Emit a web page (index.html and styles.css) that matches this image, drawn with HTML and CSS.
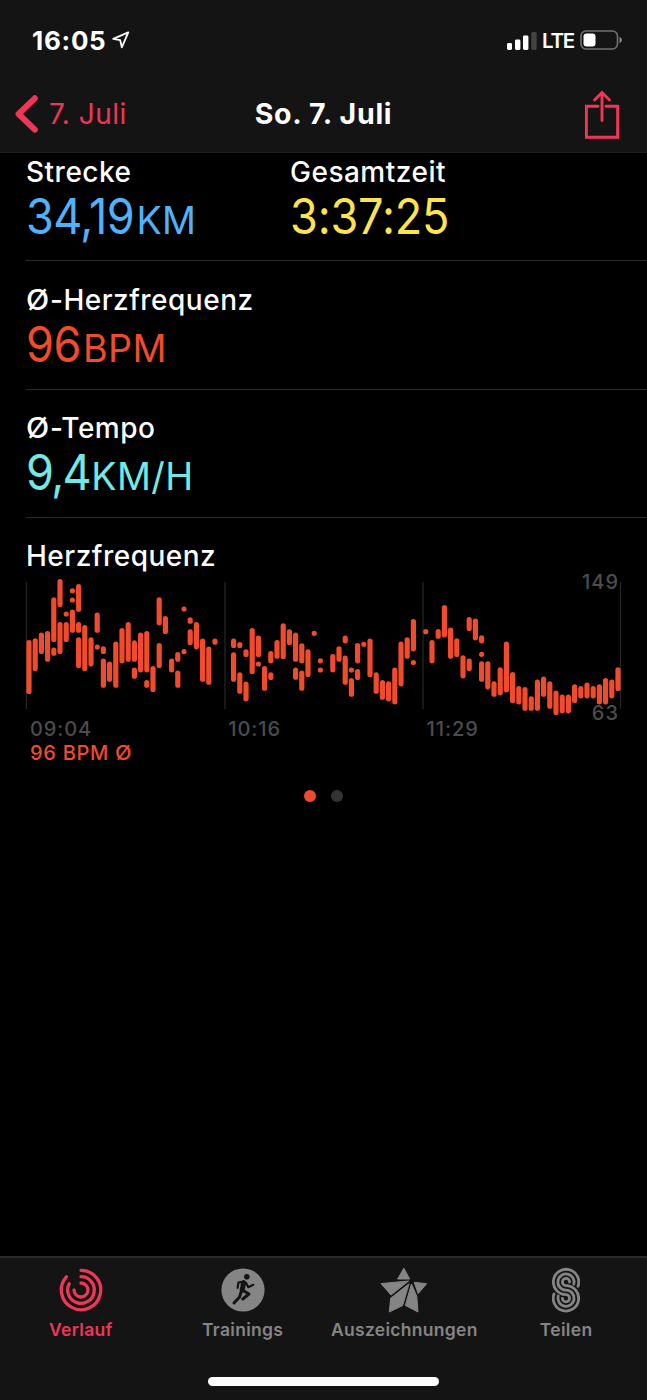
FILE: index.html
```
<!DOCTYPE html>
<html lang="de">

<head>
    <meta charset="UTF-8">
    <meta name="viewport" content="width=device-width, initial-scale=1.0">
    <title>So. 7. Juli</title>
    <link rel="stylesheet" href="styles.css">
</head>

<body>
    <header>
        <div class="statusbar">
            <span class="clock">16:05</span>
            <svg class="location" width="18" height="18" viewBox="0 0 18 18">
                <path d="M16.3 1.4L1.2 7.9L8.2 9.2L9.8 16.4Z" />
            </svg>
            <svg class="signal" width="30" height="19" viewBox="0 0 30 19">
                <rect x="0" y="12" width="5" height="7" rx="1.4" />
                <rect x="8" y="8.5" width="5.4" height="10.5" rx="1.4" />
                <rect x="16" y="4.5" width="5.4" height="14.5" rx="1.4" />
                <rect class="off" x="24.3" y="1" width="5.4" height="18" rx="1.4" />
            </svg>
            <span class="network">LTE</span>
            <svg class="battery" width="43" height="20" viewBox="0 0 43 20">
                <rect class="case" x="1" y="1" width="36.5" height="18" rx="5" />
                <rect x="3.5" y="3.4" width="12" height="13.2" rx="3" />
                <path class="tip" d="M39.5 6.8Q42 8 42 10T39.5 13.2Z" />
            </svg>
        </div>
        <nav class="navbar">
            <a class="back">
                <svg width="24" height="38" viewBox="0 0 24 38">
                    <path d="M19.8 3.3L3.6 19L19.8 34.7" />
                </svg>
                <span>7. Juli</span>
            </a>
            <h1>So. 7. Juli</h1>
            <svg class="share" width="36" height="50" viewBox="0 0 36 50">
                <path d="M14 16.3H2.4V47.3H33.6V16.3H22" />
                <path d="M18 30.5V3M10.5 10L18 2.5L25.5 10" />
            </svg>
        </nav>
    </header>

    <main>
        <section class="row first">
            <div class="metric">
                <h2>Strecke</h2>
                <p class="value distance">34,19<span>KM</span></p>
            </div>
            <div class="metric">
                <h2>Gesamtzeit</h2>
                <p class="value time">3:37:25</p>
            </div>
        </section>
        <section class="row">
            <div class="metric">
                <h2><span class="avg">Ø</span>-Herzfrequenz</h2>
                <p class="value heart">96<span>BPM</span></p>
            </div>
        </section>
        <section class="row">
            <div class="metric">
                <h2><span class="avg">Ø</span>-Tempo</h2>
                <p class="value pace">9,4<span>KM/H</span></p>
            </div>
        </section>

        <section class="chart">
            <h2>Herzfrequenz</h2>
            <svg id="graph" width="595" height="142" viewBox="26 575 595 142">
                <path class="lines" d="M26.5 582V709M225 582V709M423 582V709M620.5 582V709" />
                <text x="619" y="589">149</text>
                <text x="619" y="720">63</text>
                <path id="bars" />
            </svg>
            <div class="times">
                <span>09:04</span>
                <span>10:16</span>
                <span>11:29</span>
            </div>
            <p class="average">96 BPM <span class="avg">Ø</span></p>
        </section>

        <div class="pages">
            <i class="active"></i>
            <i></i>
        </div>
    </main>

    <footer>
        <div class="tabs">
            <a class="tab active">
                <svg width="44" height="46" viewBox="0 0 44 44">
                    <g class="stroke" stroke-width="3.3">
                        <path d="M22 2.3A19.7 19.7 0 1 1 7.4 8.8" />
                        <path d="M22 8.7A13.3 13.3 0 1 1 10.2 15.8" />
                        <path d="M22 15A7 7 0 1 1 15 22" />
                    </g>
                </svg>
                <span>Verlauf</span>
            </a>
            <a class="tab">
                <svg width="44" height="46" viewBox="0 0 44 44">
                    <circle cx="22" cy="22" r="21.6" />
                    <circle class="runner-head" cx="25.8" cy="8.8" r="2.8" />
                    <g class="runner">
                        <path stroke-width="5" d="M22.6 15L21.2 22" />
                        <path stroke-width="2.2" d="M23 13.3L17.4 14.6L16.6 19.8M25 14.8L27.3 19.2L32.3 16.8" />
                        <path stroke-width="3" d="M21.6 22.3L28 26L21.8 31M20.6 22.8L18.4 29.2L13 35" />
                    </g>
                </svg>
                <span>Trainings</span>
            </a>
            <a class="tab">
                <svg class="star" width="48" height="46" viewBox="0 0 48 46">
                    <path d="M23.9 1.2L29.7 12H17.6Z" />
                    <path d="M1 16.6L28.6 14L11 28Z" />
                    <path d="M34.2 15.3L46.6 16.7L38.2 26.6Z" />
                    <path d="M29 16.8L22.6 38.6L9.3 45L10.7 31.2Z" />
                    <path d="M31.4 17L36.8 29.3L38 45L25.4 38.4Z" />
                </svg>
                <span>Auszeichnungen</span>
            </a>
            <a class="tab">
                <svg width="28" height="46" viewBox="0 0 28 44">
                    <g class="stroke" stroke-width="2.8">
                        <path d="M26 18.3A12.7 12.7 0 1 0 14 26.7A3.6 3.6 0 1 1 10.4 30.3" />
                        <path d="M21.8 16.2A8.1 8.1 0 1 0 14 22.1A8.1 8.1 0 1 1 6.2 28" />
                        <path d="M17.6 14A3.6 3.6 0 1 0 14 17.6A12.7 12.7 0 1 1 2 26" />
                    </g>
                </svg>
                <span>Teilen</span>
            </a>
        </div>
        <div class="home"></div>
    </footer>

    <script src="script.js"></script>
</body>

</html>
```

FILE: styles.css
```
* {
    padding: 0;
    margin: 0;
    box-sizing: border-box;
    font-family: 'Inter', 'Liberation Sans', sans-serif;
}

body {
    display: flex;
    flex-direction: column;
    height: 1400px;
    background-color: #000000;
    color: #ffffff;
    overflow: hidden;
}

svg {
    display: block;
    flex-shrink: 0;
}

header {
    height: 153px;
    background-color: #141414;
    border-bottom: 1px solid #1d1d1d;
}

.statusbar {
    display: flex;
    align-items: center;
    height: 80px;
    padding: 0 25px 0 32px;
}

.clock {
    width: 80px;
    font-size: 26px;
    font-weight: 700;
    letter-spacing: 0.7px;
}

.location {
    fill: none;
    stroke: #ffffff;
    stroke-width: 1.8;
    stroke-linejoin: round;
}

.signal {
    margin-left: auto;
    fill: #ffffff;
}

.signal .off {
    fill: #434343;
}

.network {
    width: 32px;
    margin: 0 6px 0 5px;
    font-size: 20.5px;
    font-weight: 600;
    letter-spacing: -1.2px;
}

.battery {
    margin-right: -1px;
    fill: #ffffff;
}

.battery .case {
    fill: none;
    stroke: #727272;
    stroke-width: 1.6;
}

.battery .tip {
    fill: #8a8a8a;
}

.navbar {
    display: grid;
    grid-template-columns: 1fr auto 1fr;
    align-items: center;
    height: 68px;
    padding: 0 27px 0 15px;
}

.back {
    display: flex;
    align-items: center;
    gap: 10px;
    color: #ee3658;
    font-size: 28px;
    letter-spacing: 0.5px;
}

.back svg {
    fill: none;
    stroke: #ee3658;
    stroke-width: 6;
    stroke-linecap: round;
    stroke-linejoin: round;
}

h1 {
    padding-left: 12px;
    font-size: 28.5px;
    font-weight: 700;
    line-height: 34px;
    letter-spacing: 0.7px;
}

.share {
    justify-self: end;
    margin-top: 2px;
    fill: none;
    stroke: #ee3658;
    stroke-width: 2.9;
    stroke-linecap: round;
}

main {
    flex: 1;
}

.row {
    display: flex;
    height: 128.5px;
    margin-left: 26px;
    padding-top: 22.5px;
    border-bottom: 1px solid #2a2a2a;
}

.row.first {
    height: 108px;
    padding-top: 3px;
}

.metric {
    width: 264px;
}

h2 {
    font-size: 28px;
    font-weight: 500;
    line-height: 33px;
    letter-spacing: 0.5px;
    white-space: nowrap;
}

.avg {
    display: inline-block;
    transform: scaleX(1.08);
    transform-origin: left;
    margin-right: 2px;
}

/* slightly condensed digits, units keep their normal width */
.value {
    margin-top: -1px;
    font-size: 49px;
    line-height: 57px;
    letter-spacing: -0.6px;
    white-space: nowrap;
    transform: scaleX(0.92);
    transform-origin: left;
}

.value span {
    display: inline-block;
    margin-left: 2px;
    font-size: 37.5px;
    letter-spacing: 0.4px;
    transform: scaleX(1.09);
    transform-origin: left;
}

.distance {
    color: #4fb2fb;
}

.distance span {
    margin-left: 3px;
}

.time {
    color: #fde44f;
    letter-spacing: -0.2px;
}

.heart {
    color: #ef4b2d;
}

.pace {
    color: #73e8e4;
    letter-spacing: -1.8px;
}

.pace span {
    margin-left: 1px;
}

.chart {
    padding: 22px 26px 0;
}

#graph {
    margin-top: 2px;
    overflow: visible;
}

#graph text {
    fill: #4c4c4c;
    font-size: 20px;
    font-weight: 500;
    letter-spacing: 1px;
    text-anchor: end;
}

.lines {
    stroke: #272727;
    stroke-width: 1.2;
}

#bars {
    stroke: #ef4b2d;
    stroke-width: 5.2;
    stroke-linecap: round;
}

.times {
    display: flex;
    color: #4c4c4c;
}

.times span {
    width: 198.3px;
    padding-left: 4px;
    font-size: 20px;
    font-weight: 500;
    line-height: 24px;
    letter-spacing: 0.9px;
}

.average {
    padding-left: 4px;
    font-size: 20px;
    font-weight: 500;
    line-height: 24px;
    letter-spacing: 0.7px;
    color: #ef4b2d;
}

.pages {
    display: flex;
    justify-content: center;
    gap: 15px;
    margin-top: 25px;
}

.pages i {
    width: 12px;
    height: 12px;
    border-radius: 50%;
    background-color: #333333;
}

.pages .active {
    background-color: #ef4b2d;
}

footer {
    height: 144px;
    background-color: #141414;
    border-top: 2px solid #282828;
}

.tabs {
    display: flex;
    height: 119px;
    padding-top: 9px;
}

.tab {
    display: flex;
    flex: 1;
    flex-direction: column;
    align-items: center;
    gap: 5px;
    font-size: 17.5px;
    font-weight: 600;
    line-height: 24px;
    letter-spacing: 0.3px;
    color: #858585;
    fill: #858585;
}

.tab.active {
    color: #ee3658;
}

.stroke {
    fill: none;
    stroke: currentColor;
    stroke-linecap: round;
}

.runner {
    fill: none;
    stroke: #141414;
    stroke-linecap: round;
    stroke-linejoin: round;
}

.runner-head {
    fill: #141414;
}

.star {
    stroke: #858585;
    stroke-linejoin: round;
}

.home {
    width: 231px;
    height: 9px;
    margin: 0 auto;
    border-radius: 5px;
    background-color: #ffffff;
}
```

FILE: script.js
```
// [slot, top, bottom]
const ranges = [
    [0, 640, 694], [1, 638.3, 671], [2, 632.7, 654], [3, 631, 661.7],
    [4, 597.3, 642], [4, 647.7, 655.7], [5, 579, 607], [5, 622, 654],
    [6, 611.5, 616.5], [6, 622, 642], [7, 588.3, 593.3], [7, 597.5, 602.5], [7, 609.7, 632.7],
    [8, 584, 611.7], [8, 622, 632.7], [8, 637.3, 668], [9, 625, 671], [10, 637.3, 666.3],
    [11, 612.7, 632.7], [11, 644.5, 649.5], [12, 646.3, 654], [12, 658.7, 687.7],
    [13, 661.7, 681.7], [14, 641.7, 687.7], [15, 628, 663.3], [16, 622, 661.7],
    [17, 640.3, 661.7], [17, 667.7, 678.7], [18, 632.7, 672.3], [19, 631, 672.3], [19, 680, 687.7],
    [20, 666, 692], [21, 597.3, 625.3], [21, 643, 668], [22, 616, 634], [23, 658.7, 672.3],
    [24, 652, 661.7], [24, 670.7, 687.7], [25, 606.5, 611.5], [25, 649.2, 654.2],
    [26, 617.3, 623.7], [26, 629.3, 645], [27, 622, 649.3], [28, 638.7, 681.7],
    [29, 646.7, 684.7], [30, 638.7, 644.7],
    [33, 638.7, 648], [33, 652.3, 681.7], [34, 642, 648], [34, 672.3, 693.7],
    [35, 649.3, 657], [35, 681.7, 701.3], [36, 628, 674], [37, 635.7, 657], [37, 661.5, 666.5],
    [38, 666, 690.7], [39, 651, 663.3], [39, 672.3, 680], [40, 640, 658.7], [41, 623.3, 659],
    [42, 629.3, 645], [43, 632.7, 661.7], [43, 667.7, 679.7], [44, 643.3, 663.3], [44, 670.7, 690.7],
    [45, 649.3, 677], [46, 630.8, 635.8], [47, 658.3, 663.3], [47, 667.5, 672.5],
    [49, 654, 672.3], [50, 646.3, 661.7], [51, 635.7, 643.3], [51, 655.7, 684.7],
    [52, 667.5, 672.5], [52, 678, 696.7], [53, 643, 663.3], [53, 669, 680], [54, 641.8, 646.8],
    [55, 638.7, 677], [56, 672.3, 693.7], [57, 680, 699.7], [58, 681.3, 701.3],
    [59, 667.7, 704.3], [60, 641.7, 686.3], [61, 637.3, 658.7], [62, 619, 651.3], [62, 660, 665],
    [64, 629.2, 634.2], [65, 640, 663.3], [66, 629, 638.7], [67, 605, 637.3], [68, 627.7, 658.7],
    [69, 638.3, 657], [70, 655.3, 678.3], [71, 617, 631], [71, 658.7, 671], [72, 618.7, 640.3],
    [73, 635.3, 643.3], [73, 651.8, 656.8], [73, 661.3, 681.7], [74, 661.3, 689.3],
    [75, 681.3, 696.7], [76, 667.3, 695.3], [77, 641.7, 692.3], [78, 672, 703], [79, 686, 704.3],
    [80, 687, 710.7], [81, 696.3, 710.7], [82, 679.7, 710.7], [83, 676.7, 696.7],
    [84, 681.3, 708.7], [85, 690.7, 715], [86, 694.7, 713.3], [87, 694.7, 713.3],
    [88, 684.3, 703], [89, 686, 698.3], [90, 682.7, 698.3], [91, 686, 698.3],
    [92, 684.3, 704.3], [93, 678, 704.3], [94, 679.7, 698.3], [95, 667.3, 691]
];

// the round caps stick out by half the stroke width
const cap = 2.5;
const d = ranges.map(([slot, top, bottom]) => {
    const x = (29 + slot * 6.2).toFixed(1);
    return `M${x} ${top + cap}V${bottom - cap + 0.01}`;
});

document.querySelector('#bars').setAttribute('d', d.join(''));
```
